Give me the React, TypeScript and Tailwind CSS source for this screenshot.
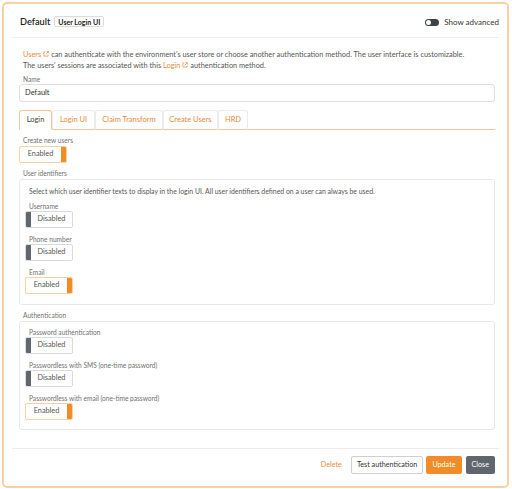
import React from "react";

function ExtIcon() {
  return (
    <svg width="6" height="6" viewBox="0 0 10 10" className="mx-[2px] inline-block align-baseline" fill="none" stroke="currentColor" strokeWidth="1.2">
      <path d="M4 1.5H1.5v7h7V6" />
      <path d="M6 1h3v3M9 1L4.5 5.5" />
    </svg>
  );
}

function Toggle({ on }: { on: boolean }) {
  if (on) {
    return (
      <div className="flex h-[17px] w-[48px] overflow-hidden rounded-[2px] border border-[#f9cfa3] bg-white">
        <div className="flex flex-1 items-center justify-center text-[7.3px] text-[#555]">Enabled</div>
        <div className="w-[5px] bg-[#f28c28]" />
      </div>
    );
  }
  return (
    <div className="flex h-[17px] w-[48px] overflow-hidden rounded-[2px] border border-[#d8dbde] bg-white">
      <div className="w-[5px] bg-[#5f666d]" />
      <div className="flex flex-1 items-center justify-center text-[7.3px] text-[#555]">Disabled</div>
    </div>
  );
}

function Label({ children }: { children: React.ReactNode }) {
  return <div className="h-[10px] pl-[4px] text-[6.6px] leading-[10px] text-[#6f6f6f]">{children}</div>;
}

function Field({ label, on }: { label: string; on: boolean }) {
  return (
    <div className="flex flex-col">
      <Label>{label}</Label>
      <Toggle on={on} />
    </div>
  );
}

const tabs = [
  { name: "Login", w: "w-[33px]" },
  { name: "Login UI", w: "w-[43px]" },
  { name: "Claim Transform", w: "w-[68px]" },
  { name: "Create Users", w: "w-[55px]" },
  { name: "HRD", w: "w-[30px]" },
];

export default function App() {
  return (
    <div className="h-[489px] w-[512px] bg-white pl-[2px] pr-[3px] pt-[2px]" style={{ fontFamily: 'Lato, "Open Sans", sans-serif' }}>
      <div className="flex h-[486px] flex-col rounded-[5px] border-2 border-[#fbd0a0] px-[8px]">
        {/* header */}
        <div className="flex h-[34px] shrink-0 items-center justify-between border-b border-[#ececec] pl-[8px] pr-0 pt-[3px]">
          <div className="flex items-center gap-[4px]">
            <span className="text-[9.2px] font-semibold text-[#222]">Default</span>
            <span className="flex h-[11px] items-center rounded-[2px] border border-[#dcdcdc] px-[3px] text-[7px] font-bold text-[#222]">User Login UI</span>
          </div>
          <div className="flex items-center gap-[5px]">
            <div className="relative h-[7px] w-[14px] rounded-full bg-[#3d4248]">
              <div className="absolute left-[1px] top-[1px] h-[5px] w-[5px] rounded-full bg-white" />
            </div>
            <span className="text-[8px] text-[#333]">Show advanced</span>
          </div>
        </div>

        {/* body */}
        <div className="flex flex-col pl-[7px] pr-[4px] pt-[11px]">
          <p className="whitespace-nowrap pl-[4px] text-[7.35px] leading-[11px] text-[#555]">
            <span className="text-[#e9893a]">Users<ExtIcon /></span>can authenticate with the environment's user store or choose another authentication method. The user interface is customizable.
            <br />
            The users' sessions are associated with this <span className="text-[#e9893a]">Login<ExtIcon /></span>authentication method.
          </p>
          <div className="mt-[3px]">
            <Label>Name</Label>
          </div>
          <div className="flex h-[18px] items-center rounded-[3px] border border-[#dedede] px-[5px] text-[7.5px] text-[#333]">Default</div>

          {/* tabs */}
          <div className="mt-[8px] flex h-[20px] border-b border-[#f9c48f]">
            {tabs.map((t, i) =>
              i === 0 ? (
                <div key={t.name} className={`-mb-px flex ${t.w} items-center justify-center rounded-t-[3px] border border-[#f9c48f] border-b-white bg-white text-[7.5px] text-[#444]`}>
                  {t.name}
                </div>
              ) : (
                <div key={t.name} className={`-mb-px flex ${t.w} items-center justify-center rounded-t-[3px] border border-[#ebebeb] border-b-[#f9c48f] text-[7.5px] text-[#e9893a]`}>
                  {t.name}
                </div>
              )
            )}
          </div>

          <div className="mt-[5px]">
            <Label>Create new users</Label>
          </div>
          <div className="mt-[1px]">
            <Toggle on />
          </div>

          <div className="mt-[5px]">
            <Label>User identifiers</Label>
          </div>
          <div className="mt-[1px] flex h-[126px] flex-col rounded-[3px] border border-[#e8e8e8] px-[5px] pt-[6px]">
            <div className="pl-[4px] text-[6.9px] leading-[11px] text-[#555]">
              Select which user identifier texts to display in the login UI. All user identifiers defined on a user can always be used.
            </div>
            <div className="mt-[4px] flex flex-col gap-[6px]">
              <Field label="Username" on={false} />
              <Field label="Phone number" on={false} />
              <Field label="Email" on />
            </div>
          </div>

          <div className="mt-[5px]">
            <Label>Authentication</Label>
          </div>
          <div className="mt-[1px] flex h-[109px] flex-col gap-[6px] rounded-[3px] border border-[#e8e8e8] px-[5px] pt-[5px]">
            <Field label="Password authentication" on={false} />
            <Field label="Passwordless with SMS (one-time password)" on={false} />
            <Field label="Passwordless with email (one-time password)" on />
          </div>
        </div>

        {/* footer */}
        <div className="mt-auto flex h-[38px] shrink-0 items-start justify-end border-t border-[#ececec] pr-[4px] pt-[7px]">
          <span className="mr-[9px] mt-[4px] text-[7.2px] text-[#e9893a]">Delete</span>
          <button className="h-[18px] rounded-[2px] border border-[#cfcfcf] bg-white px-[5px] text-[7.2px] text-[#333]">Test authentication</button>
          <button className="ml-[3px] h-[18px] rounded-[2px] bg-[#f28c28] px-[6px] text-[7.2px] text-white">Update</button>
          <button className="ml-[4px] h-[18px] rounded-[2px] bg-[#5f666d] px-[6px] text-[7.2px] text-white">Close</button>
        </div>
      </div>
    </div>
  );
}
